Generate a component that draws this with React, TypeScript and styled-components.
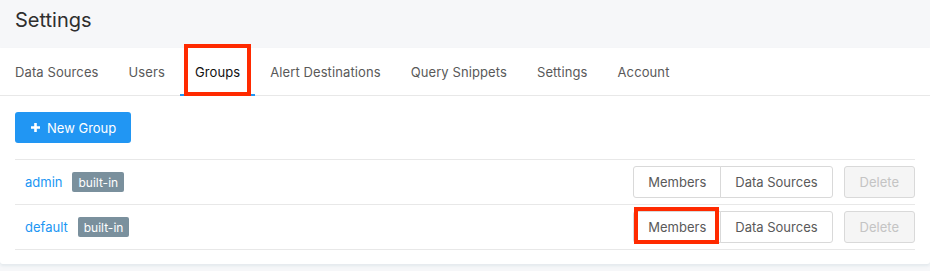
import React from 'react'
import styled, { createGlobalStyle, css } from 'styled-components'

const GlobalStyle = createGlobalStyle`
  body {
    margin: 0;
    background: #f6f7f9;
    font-family: Inter, "Liberation Sans", sans-serif;
    color: #333;
    -webkit-font-smoothing: antialiased;
  }
`

const Page = styled.div`
  display: flex;
  flex-direction: column;
  width: 930px;
  height: 271px;
  overflow: hidden;
`

const Header = styled.div`
  height: 48px;
  display: flex;
  align-items: center;
  padding: 0 15px;
  box-sizing: border-box;
`

const Title = styled.h1`
  margin: 0 0 8px;
  font-size: 20px;
  font-weight: 400;
  color: #2f2f2f;
`

const Panel = styled.div`
  background: #fff;
  height: 216px;
  border-radius: 0 0 3px 3px;
  box-shadow: 0 2px 3px rgba(102, 136, 153, 0.12);
`

const Tabs = styled.div`
  display: flex;
  height: 48px;
  border-bottom: 1px solid #e8e8e8;
  box-sizing: border-box;
`

const Tab = styled.div<{ active?: boolean }>`
  position: relative;
  display: flex;
  align-items: center;
  padding: 0 15px;
  font-size: 13px;
  letter-spacing: 0.1px;
  color: #595959;
  ${({ active }) =>
    active &&
    css`
      color: #111;
      &::after {
        content: '';
        position: absolute;
        left: 0;
        right: 0;
        bottom: -1px;
        height: 2px;
        background: #2196f3;
      }
    `};
`

// red annotation frame drawn over the marked element
const Marked = styled.span<{ box: string }>`
  position: relative;
  display: inline-flex;
  &::after {
    content: '';
    position: absolute;
    z-index: 2;
    inset: ${({ box }) => box};
    border: 4px solid #ff2a00;
    pointer-events: none;
  }
`

const Content = styled.div`
  padding: 16px 15px 0;
`

const PrimaryButton = styled.button`
  display: inline-flex;
  align-items: center;
  gap: 6px;
  height: 31px;
  padding: 0 15px 0 15px;
  border: none;
  border-radius: 3px;
  background: #2196f3;
  color: #fff;
  font-family: inherit;
  font-size: 13px;
`

const Table = styled.div`
  margin-top: 16px;
  border-top: 1px solid #e8e8e8;
`

const Row = styled.div`
  display: flex;
  align-items: center;
  height: 45px;
  padding: 0 0 0 10px;
  border-bottom: 1px solid #e8e8e8;
  box-sizing: border-box;
`

const GroupName = styled.span`
  display: flex;
  align-items: center;
  gap: 10px;
  flex: 1;
  font-size: 13px;
  color: #2196f3;
`

const Badge = styled.span`
  display: inline-flex;
  align-items: center;
  height: 20px;
  padding: 0 6px;
  border-radius: 2px;
  background: #7a909d;
  color: #fff;
  font-size: 12px;
`

const ButtonGroup = styled.div`
  display: flex;
`

const Button = styled.button<{ disabled?: boolean; joined?: 'left' | 'right' }>`
  position: relative;
  height: 32px;
  padding: 0 14px;
  border: 1px solid #d9d9d9;
  background: #fff;
  color: #595959;
  font-family: inherit;
  font-size: 13px;
  border-radius: 3px;
  ${({ joined }) =>
    joined === 'left' &&
    css`
      border-radius: 3px 0 0 3px;
    `};
  ${({ joined }) =>
    joined === 'right' &&
    css`
      border-radius: 0 3px 3px 0;
      margin-left: -1px;
    `};
  ${({ disabled }) =>
    disabled &&
    css`
      margin-left: 11px;
      padding: 0 15px;
      background: #f5f5f5;
      color: #c4c4c4;
    `};
`

const groups = [
  { name: 'admin', marked: false },
  { name: 'default', marked: true },
]

export default function App() {
  return (
    <Page>
      <GlobalStyle />
      <Header>
        <Title>Settings</Title>
      </Header>
      <Panel>
        <Tabs>
          <Tab>Data Sources</Tab>
          <Tab>Users</Tab>
          <Tab active>
            <Marked box="-20px -11px -16px -11px">Groups</Marked>
          </Tab>
          <Tab>Alert Destinations</Tab>
          <Tab>Query Snippets</Tab>
          <Tab>Settings</Tab>
          <Tab>Account</Tab>
        </Tabs>
        <Content>
          <PrimaryButton>
            <svg width="11" height="11" viewBox="0 0 11 11">
              <path d="M5.5 1v9M1 5.5h9" stroke="#fff" strokeWidth="2.6" />
            </svg>
            New Group
          </PrimaryButton>
          <Table>
            {groups.map((g) => (
              <Row key={g.name}>
                <GroupName>
                  {g.name}
                  <Badge>built-in</Badge>
                </GroupName>
                <ButtonGroup>
                  {g.marked ? (
                    <Marked box="-4px 2px -1px 1px">
                      <Button joined="left">Members</Button>
                    </Marked>
                  ) : (
                    <Button joined="left">Members</Button>
                  )}
                  <Button joined="right">Data Sources</Button>
                </ButtonGroup>
                <Button disabled>Delete</Button>
              </Row>
            ))}
          </Table>
        </Content>
      </Panel>
    </Page>
  )
}
